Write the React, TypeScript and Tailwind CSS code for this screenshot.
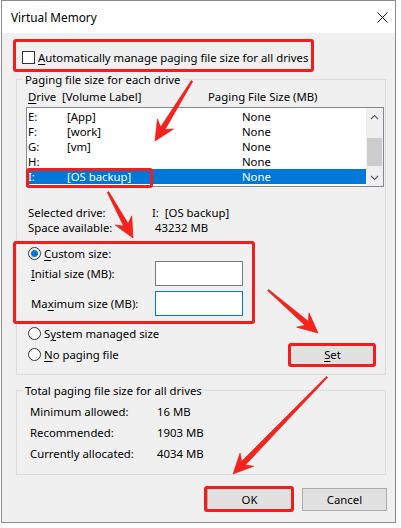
import React from 'react';

type Pt = [number, number];

// tapered annotation arrow: thin tail, wider neck, swept-back head
function arrowPoints(tail: Pt, tip: Pt, headLen = 20, headHalf = 9.5, w0 = 0.8, w1 = 2.6): string {
  const dx = tip[0] - tail[0];
  const dy = tip[1] - tail[1];
  const len = Math.hypot(dx, dy);
  const ux = dx / len;
  const uy = dy / len;
  const px = -uy;
  const py = ux;
  const at = (d: number, o: number): Pt => [tip[0] - ux * d + px * o, tip[1] - uy * d + py * o];
  const pts: Pt[] = [
    tip,
    at(headLen, headHalf),
    at(headLen - 5, w1),
    [tail[0] + px * w0, tail[1] + py * w0],
    [tail[0] - px * w0, tail[1] - py * w0],
    at(headLen - 5, -w1),
    at(headLen, -headHalf),
  ];
  return pts.map((p) => `${p[0].toFixed(1)},${p[1].toFixed(1)}`).join(' ');
}

const arrows: [Pt, Pt][] = [
  [[192, 81], [155, 141]],
  [[108, 192], [133, 238]],
  [[268, 290], [318, 333]],
  [[327, 377], [233, 474]],
];

const drives = [
  { letter: 'E:', label: '[App]', size: 'None' },
  { letter: 'F:', label: '[work]', size: 'None' },
  { letter: 'G:', label: '[vm]', size: 'None' },
  { letter: 'H:', label: '', size: 'None' },
  { letter: 'I:', label: '[OS backup]', size: 'None', selected: true },
];

function U({ children }: { children: React.ReactNode }) {
  return <span className="underline underline-offset-[2px] decoration-[1px]">{children}</span>;
}

function Radio({ on }: { on?: boolean }) {
  return (
    <span className="w-[13px] h-[13px] shrink-0 rounded-full border border-[#333] bg-white flex items-center justify-center">
      {on && <span className="w-[7px] h-[7px] rounded-full bg-[#0078d7]" />}
    </span>
  );
}

function Button({ children, className = '' }: { children: React.ReactNode; className?: string }) {
  return (
    <div className={`w-[85px] h-[23px] border border-[#adadad] bg-[#e1e1e1] flex items-center justify-center ${className}`}>
      {children}
    </div>
  );
}

export default function App() {
  return (
    <div className="relative w-[401px] h-[528px] bg-white text-black font-['Noto_Sans',sans-serif] text-[11.35px] leading-[15px] overflow-hidden">
      {/* Dialog window */}
      <div className="ml-[1px] w-[395px] h-[523px] border border-[#8c8c8c] bg-[#f0f0f0] flex flex-col">
        {/* Title bar */}
        <div className="h-[32px] bg-white flex items-center justify-between pl-[9px] pr-[6px] shrink-0">
          <span className="text-[11.8px]">Virtual Memory</span>
          <svg width="11" height="11" viewBox="0 0 11 11" className="mr-[1px]">
            <path d="M0.5 0.5 L10.5 10.5 M10.5 0.5 L0.5 10.5" stroke="#111" strokeWidth="1" fill="none" />
          </svg>
        </div>

        {/* Body */}
        <div className="pl-[14px] flex flex-col">
          <div className="mt-[18px] h-[13px] flex items-center">
            <span className="ml-[6px] w-[13px] h-[13px] border border-[#333] bg-white shrink-0" />
            <span className="ml-[3px] leading-[13px]">
              <U>A</U>utomatically manage paging file size for all drives
            </span>
          </div>

          {/* Paging file size for each drive */}
          <div className="mt-[15px] w-[370px] h-[296px] border border-[#dcdcdc] flex flex-col">
            <div className="-mt-[8px] ml-[6px] w-fit px-[2px] bg-[#f0f0f0]">Paging file size for each drive</div>

            <div className="mt-[2px] pl-[11px] flex">
              <span className="w-[34px]">
                <U>D</U>rive
              </span>
              <span className="w-[146px]">[Volume Label]</span>
              <span>Paging File Size (MB)</span>
            </div>

            <div className="mt-[3px] ml-[9px] w-[358px] h-[80px] border border-[#828790] bg-white flex">
              <div className="flex-1 pt-[1px] flex flex-col">
                {drives.map((d) => (
                  <div
                    key={d.letter}
                    className={`h-[15px] pl-[1px] flex items-center ${d.selected ? 'bg-[#0078d7] text-white' : ''}`}
                  >
                    <span className="w-[39px]">{d.letter}</span>
                    <span className="w-[175px]">{d.label}</span>
                    <span>{d.size}</span>
                  </div>
                ))}
              </div>
              <div className="w-[17px] bg-[#f0f0f0] flex flex-col">
                <div className="h-[17px] flex items-center justify-center">
                  <svg width="9" height="6" viewBox="0 0 9 6">
                    <polyline points="1,5 4.5,1.5 8,5" fill="none" stroke="#606060" strokeWidth="1.2" />
                  </svg>
                </div>
                <div className="mt-[13px] mx-[1px] h-[28px] bg-[#cdcdcd]" />
                <div className="flex-1" />
                <div className="h-[17px] flex items-center justify-center">
                  <svg width="9" height="6" viewBox="0 0 9 6">
                    <polyline points="1,1 4.5,4.5 8,1" fill="none" stroke="#606060" strokeWidth="1.2" />
                  </svg>
                </div>
              </div>
            </div>

            <div className="mt-[18px] pl-[11px] flex">
              <span className="w-[124px]">Selected drive:</span>
              <span>I:&nbsp;&nbsp;[OS backup]</span>
            </div>
            <div className="pl-[11px] flex">
              <span className="w-[127px]">Space available:</span>
              <span>43232 MB</span>
            </div>

            <div className="mt-[11px] pl-[11px] h-[15px] flex items-center">
              <Radio on />
              <span className="ml-[3px]">
                <U>C</U>ustom size:
              </span>
            </div>
            <div className="pl-[14px] h-[25px] flex items-center">
              <span className="w-[124px]">
                <U>I</U>nitial size (MB):
              </span>
              <div className="w-[88px] h-[25px] border border-[#7a7a7a] bg-white" />
            </div>
            <div className="mt-[5px] pl-[14px] h-[25px] flex items-center">
              <span className="w-[124px]">
                Ma<U>x</U>imum size (MB):
              </span>
              <div className="w-[88px] h-[25px] border border-[#0078d7] bg-white" />
            </div>

            <div className="mt-[10px] pl-[11px] h-[15px] flex items-center">
              <Radio />
              <span className="ml-[3px]">
                S<U>y</U>stem managed size
              </span>
            </div>
            <div className="mt-[2px] pl-[11px] pr-[10px] h-[23px] flex items-center justify-between">
              <div className="flex items-center">
                <Radio />
                <span className="ml-[3px]">
                  <U>N</U>o paging file
                </span>
              </div>
              <Button>
                <U>S</U>et
              </Button>
            </div>
          </div>

          {/* Total paging file size */}
          <div className="mt-[15px] w-[370px] h-[85px] border border-[#dcdcdc] flex flex-col">
            <div className="-mt-[8px] ml-[6px] w-fit px-[2px] bg-[#f0f0f0]">Total paging file size for all drives</div>
            <div className="mt-[6px] pl-[13px] flex flex-col gap-[6px]">
              <div className="flex">
                <span className="w-[127px]">Minimum allowed:</span>
                <span>16 MB</span>
              </div>
              <div className="flex">
                <span className="w-[127px]">Recommended:</span>
                <span>1903 MB</span>
              </div>
              <div className="flex">
                <span className="w-[127px]">Currently allocated:</span>
                <span>4034 MB</span>
              </div>
            </div>
          </div>

          <div className="mt-[13px] w-[371px] flex justify-end gap-[10px]">
            <Button>OK</Button>
            <Button>Cancel</Button>
          </div>
        </div>
      </div>

      {/* Red annotation boxes */}
      <div className="absolute left-[13px] top-[39px] w-[301px] h-[33px] border-[3px] border-[#f21d1d] rounded-[3px]" />
      <div className="absolute left-[26px] top-[168px] w-[127px] h-[20px] border-[3px] border-[#f21d1d] rounded-[3px]" />
      <div className="absolute left-[13px] top-[241px] w-[242px] h-[83px] border-[3px] border-[#f21d1d] rounded-[3px]" />
      <div className="absolute left-[288px] top-[343px] w-[88px] h-[24px] border-[3px] border-[#f21d1d] rounded-[3px]" />
      <div className="absolute left-[204px] top-[486px] w-[90px] h-[26px] border-[3px] border-[#f21d1d] rounded-[3px]" />

      {/* Red arrows */}
      <svg className="absolute left-0 top-0 pointer-events-none" width="401" height="528" viewBox="0 0 401 528">
        {arrows.map(([tail, tip], i) => (
          <polygon key={i} points={arrowPoints(tail, tip)} fill="#f5231b" stroke="#e01010" strokeWidth="0.6" strokeLinejoin="round" />
        ))}
      </svg>
    </div>
  );
}
